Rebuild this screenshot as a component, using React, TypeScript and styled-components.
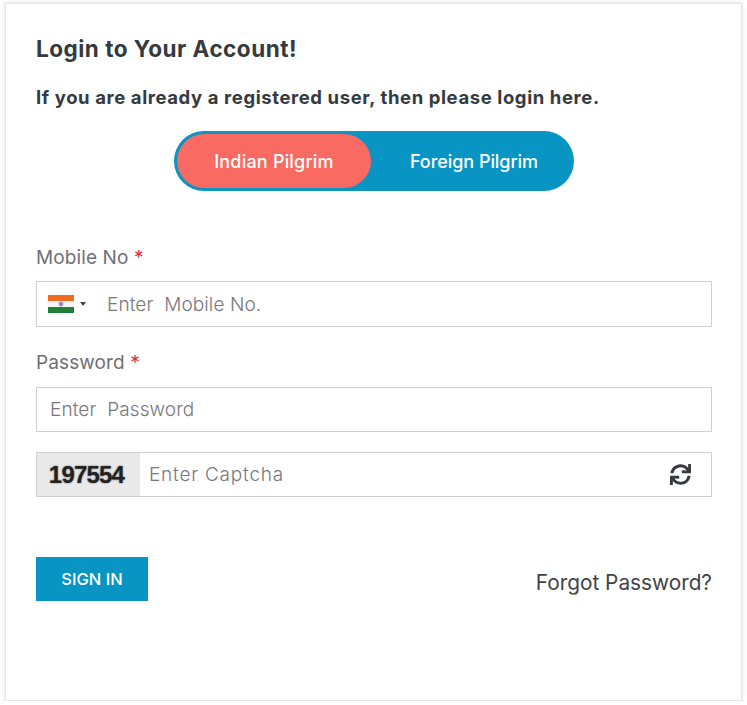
import { createGlobalStyle } from "styled-components";
import styled from "styled-components";
import { FaSync } from "react-icons/fa";

const GlobalStyle = createGlobalStyle`
  html, body {
    margin: 0;
    padding: 0;
    background: #fff;
    font-family: "Inter", "Noto Sans", sans-serif;
  }
`;

const Card = styled.div`
  box-sizing: border-box;
  width: 737px;
  height: 698px;
  margin: 3px 0 0 5px;
  padding: 30px 30px 0 30px;
  background: #fff;
  border: 1px solid #e6e6e6;
  box-shadow: 0 0 4px rgba(0, 0, 0, 0.14);
`;

const Title = styled.h2`
  margin: 0;
  font-size: 22.5px;
  line-height: 30px;
  font-weight: 700;
  color: #343a40;
  letter-spacing: 0.5px;
`;

const Subtitle = styled.p`
  margin: 21px 0 0;
  font-size: 18.5px;
  line-height: 24px;
  font-weight: 700;
  color: #343a40;
  letter-spacing: 0.6px;
`;

const Toggle = styled.div`
  box-sizing: border-box;
  display: flex;
  align-items: stretch;
  width: 400px;
  height: 60px;
  margin: 22px 0 0 138px;
  padding: 3px;
  border-radius: 30px;
  background: #0895c3;
`;

const ToggleOption = styled.div<{ $active?: boolean }>`
  box-sizing: border-box;
  display: flex;
  align-items: center;
  justify-content: center;
  width: ${(p) => (p.$active ? "194px" : "200px")};
  padding-left: ${(p) => (p.$active ? "0" : "6px")};
  border-radius: 27px;
  font-size: 18px;
  font-weight: 500;
  letter-spacing: ${(p) => (p.$active ? "0.2px" : "-0.05px")};
  color: #fff;
  background: ${(p) => (p.$active ? "#f96a62" : "transparent")};
`;

const Label = styled.label`
  display: block;
  font-size: 19px;
  line-height: 26px;
  letter-spacing: 0.1px;
  color: #6f6f74;
`;

const MobileLabel = styled(Label)`
  margin-top: 54px;
`;

const PasswordLabel = styled(Label)`
  margin-top: 23px;
`;

const Star = styled.span`
  color: #d9303e;
`;

const Field = styled.div<{ $height: number }>`
  box-sizing: border-box;
  display: flex;
  align-items: center;
  width: 676px;
  height: ${(p) => p.$height}px;
  margin-top: 10px;
  border: 1px solid #d0d0d0;
  background: #fff;
`;

const PasswordField = styled(Field)`
  margin-top: 11px;
`;

const Input = styled.input`
  flex: 1;
  min-width: 0;
  height: 100%;
  padding: 0 0 0 13px;
  border: none;
  outline: none;
  background: transparent;
  font-family: inherit;
  font-size: 19px;
  font-weight: 300;
  letter-spacing: 0.1px;
  color: #333;
  &::placeholder {
    color: #77777c;
    opacity: 1;
  }
`;

const FlagButton = styled.div`
  display: flex;
  align-items: center;
  gap: 6px;
  width: 57px;
  padding-left: 11px;
  box-sizing: border-box;
`;

const Caret = styled.span`
  width: 0;
  height: 0;
  border-left: 3px solid transparent;
  border-right: 3px solid transparent;
  border-top: 4px solid #444;
`;

const CaptchaField = styled(Field)`
  margin-top: 20px;
`;

const CaptchaCode = styled.div`
  box-sizing: border-box;
  display: flex;
  align-items: center;
  justify-content: center;
  width: 103px;
  height: 100%;
  padding-right: 4px;
  background: #e9e9e9;
  font-family: "Liberation Sans", Arial, sans-serif;
  font-weight: 700;
  font-size: 24px;
  letter-spacing: -0.8px;
  color: #222;
  text-shadow: 0 0 2px rgba(0, 0, 0, 0.55);
`;

const CaptchaInput = styled(Input)`
  padding-left: 9px;
  letter-spacing: 0.8px;
`;

const RefreshButton = styled.button`
  display: flex;
  align-items: center;
  justify-content: center;
  width: 62px;
  height: 100%;
  padding: 0;
  border: none;
  background: transparent;
  color: #343a40;
  font-size: 21px;
`;

const Actions = styled.div`
  display: flex;
  align-items: center;
  justify-content: space-between;
  width: 676px;
  margin-top: 60px;
`;

const SignIn = styled.button`
  width: 112px;
  height: 44px;
  border: none;
  background: #0895c3;
  color: #fff;
  font-family: inherit;
  font-size: 16.5px;
  font-weight: 500;
`;

const Forgot = styled.a`
  margin-top: 6px;
  font-size: 20.8px;
  color: #3f4347;
  text-decoration: none;
`;

const IndiaFlag = () => (
  <svg width="26" height="18" viewBox="0 0 26 18">
    <rect width="26" height="6" fill="#f26b21" />
    <rect y="6" width="26" height="6" fill="#f4f4f4" />
    <rect y="12" width="26" height="6" fill="#1f7f37" />
    <circle cx="13" cy="9" r="2.4" fill="#8d93b8" />
  </svg>
);

const App = () => {
  return (
    <>
      <GlobalStyle />
      <Card>
        <Title>Login to Your Account!</Title>
        <Subtitle>If you are already a registered user, then please login here.</Subtitle>
        <Toggle>
          <ToggleOption $active>Indian Pilgrim</ToggleOption>
          <ToggleOption>Foreign Pilgrim</ToggleOption>
        </Toggle>
        <MobileLabel>
          Mobile No <Star>*</Star>
        </MobileLabel>
        <Field $height={46}>
          <FlagButton>
            <IndiaFlag />
            <Caret />
          </FlagButton>
          <Input placeholder="Enter  Mobile No." />
        </Field>
        <PasswordLabel>
          Password <Star>*</Star>
        </PasswordLabel>
        <PasswordField $height={45}>
          <Input placeholder="Enter  Password" />
        </PasswordField>
        <CaptchaField $height={45}>
          <CaptchaCode>197554</CaptchaCode>
          <CaptchaInput placeholder="Enter Captcha" />
          <RefreshButton>
            <FaSync />
          </RefreshButton>
        </CaptchaField>
        <Actions>
          <SignIn>SIGN IN</SignIn>
          <Forgot href="#">Forgot Password?</Forgot>
        </Actions>
      </Card>
    </>
  );
};

export default App;
